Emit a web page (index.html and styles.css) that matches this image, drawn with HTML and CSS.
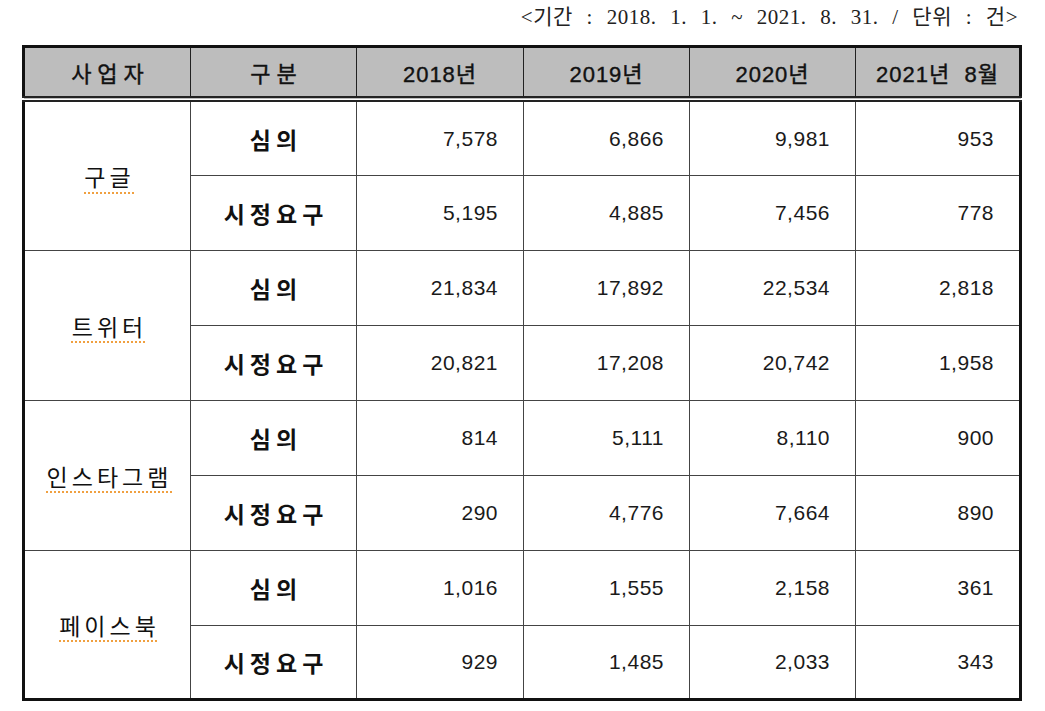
FILE: index.html
```html
<!DOCTYPE html>
<html lang="ko">
<head>
<meta charset="utf-8">
<title>사업자별 심의 및 시정요구 현황</title>
<link rel="stylesheet" href="styles.css">
</head>
<body>
<div class="wrap">
  <div class="period">&lt;기간 : 2018. 1. 1. ~ 2021. 8. 31. / 단위 : 건&gt;</div>
  <table class="stats">
    <colgroup>
      <col class="c1"><col class="c2"><col class="c3"><col class="c4"><col class="c5"><col class="c6">
    </colgroup>
    <thead>
      <tr>
        <th class="sp">사업자</th>
        <th class="sp">구분</th>
        <th>2018년</th>
        <th>2019년</th>
        <th>2020년</th>
        <th>2021년&nbsp; 8월</th>
      </tr>
    </thead>
    <tbody>
      <tr class="top">
        <td rowspan="2" class="company"><span class="squig">구글</span></td>
        <td class="kind">심의</td>
        <td class="num">7,578</td><td class="num">6,866</td><td class="num">9,981</td><td class="num">953</td>
      </tr>
      <tr>
        <td class="kind">시정요구</td>
        <td class="num">5,195</td><td class="num">4,885</td><td class="num">7,456</td><td class="num">778</td>
      </tr>
      <tr>
        <td rowspan="2" class="company"><span class="squig">트위터</span></td>
        <td class="kind">심의</td>
        <td class="num">21,834</td><td class="num">17,892</td><td class="num">22,534</td><td class="num">2,818</td>
      </tr>
      <tr>
        <td class="kind">시정요구</td>
        <td class="num">20,821</td><td class="num">17,208</td><td class="num">20,742</td><td class="num">1,958</td>
      </tr>
      <tr>
        <td rowspan="2" class="company"><span class="squig">인스타그램</span></td>
        <td class="kind">심의</td>
        <td class="num">814</td><td class="num">5,111</td><td class="num">8,110</td><td class="num">900</td>
      </tr>
      <tr>
        <td class="kind">시정요구</td>
        <td class="num">290</td><td class="num">4,776</td><td class="num">7,664</td><td class="num">890</td>
      </tr>
      <tr>
        <td rowspan="2" class="company"><span class="squig">페이스북</span></td>
        <td class="kind">심의</td>
        <td class="num">1,016</td><td class="num">1,555</td><td class="num">2,158</td><td class="num">361</td>
      </tr>
      <tr class="end">
        <td class="kind">시정요구</td>
        <td class="num">929</td><td class="num">1,485</td><td class="num">2,033</td><td class="num">343</td>
      </tr>
    </tbody>
  </table>
</div>
</body>
</html>
```
FILE: styles.css
```css
html, body {
  margin: 0;
  padding: 0;
  background: #ffffff;
}

.wrap {
  width: 998px;
  margin-left: 22px;
}

.period {
  font-family: "Liberation Serif", "Noto Sans CJK KR", serif;
  font-size: 21px;
  line-height: 34px;
  height: 34px;
  margin-bottom: 11px;
  text-align: right;
  padding-right: 2px;
  color: #222;
  letter-spacing: 0.5px;
  word-spacing: 8px;
  white-space: nowrap;
}

.stats {
  width: 997px;
  table-layout: fixed;
  border-collapse: collapse;
  border: 3px solid #111;
  font-family: "Liberation Sans", "Noto Sans CJK KR", sans-serif;
  color: #111;
}

.c1 { width: 167px; }
.c2 { width: 166px; }
.c3 { width: 167px; }
.c4 { width: 166px; }
.c5 { width: 166px; }
.c6 { width: 165px; }

.stats th {
  background: #bdbdbd;
  height: 48px;
  padding: 0;
  font-size: 22px;
  font-weight: normal;
  text-align: center;
  border-left: 1px solid #222;
  border-right: 1px solid #222;
  border-bottom: 6px double #222;
  letter-spacing: 1px;
  -webkit-text-stroke: 0.4px #111;
  white-space: nowrap;
}

.stats th.sp {
  letter-spacing: 6px;
  padding-left: 6px;
}

.stats td {
  height: 74px;
  padding: 0;
  border: 1px solid #444;
}

.stats tr.top td {
  height: 73px;
}

.stats tr.end td {
  height: 72px;
}

.company {
  text-align: center;
  font-size: 23px;
  letter-spacing: 4px;
  padding-left: 4px !important;
}

.squig {
  text-decoration: underline dotted #f0a040;
  text-decoration-thickness: 2px;
  text-underline-offset: 6px;
}

.kind {
  text-align: center;
  font-size: 23px;
  font-weight: bold;
  letter-spacing: 5px;
  padding-left: 5px !important;
}

.num {
  text-align: right;
  font-size: 21px;
  padding-right: 25px !important;
  color: #1a1a1a;
  letter-spacing: 0.5px;
}
```
